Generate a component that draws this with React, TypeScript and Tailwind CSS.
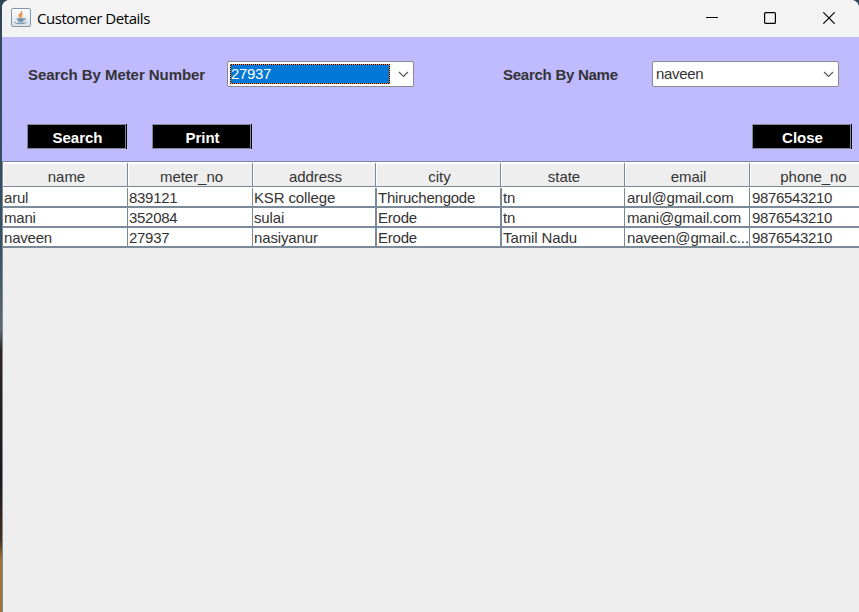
import React from "react";

const columns = [
  { name: "name", head: "w-[125px]", cell: "w-[125px] border-r pl-px tracking-[-0.2px]" },
  { name: "meter_no", head: "w-[125px]", cell: "w-[125px] border-r pl-px tracking-[-0.3px]" },
  { name: "address", head: "w-[123px]", cell: "w-[124px] border-r-2 pl-px tracking-[-0.13px]" },
  { name: "city", head: "w-[125px]", cell: "w-[125px] border-r-2 pl-px tracking-[-0.23px]" },
  { name: "state", head: "w-[124px]", cell: "w-[123px] border-r pl-px tracking-[-0.1px]" },
  { name: "email", head: "w-[125px]", cell: "w-[125px] border-r pl-[2px] tracking-[-0.15px]" },
  { name: "phone_no", head: "w-[125px]", cell: "w-[125px] border-r pl-[2px] tracking-[-0.33px]" },
];

const rows = [
  ["arul", "839121", "KSR college", "Thiruchengode", "tn", "arul@gmail.com", "9876543210"],
  ["mani", "352084", "sulai", "Erode", "tn", "mani@gmail.com", "9876543210"],
  ["naveen", "27937", "nasiyanur", "Erode", "Tamil Nadu", "naveen@gmail.c...", "9876543210"],
];

function JavaIcon() {
  return (
    <svg width="20" height="19" viewBox="0 0 20 19" fill="none">
      <defs>
        <linearGradient id="tile" x1="0" y1="0" x2="0" y2="1">
          <stop stopColor="#ffffff" />
          <stop offset="1" stopColor="#dce1e6" />
        </linearGradient>
      </defs>
      <rect x="0.5" y="0.5" width="19" height="18" rx="1.5" fill="url(#tile)" stroke="#7e98ae" />
      <path d="M10.5 3C11.5 5 7 6 8 8.3L9.5 10C9.3 8.2 11.5 7 10.5 3Z" fill="#ee8c3d" stroke="#ee8c3d" strokeWidth="0.9" />
      <path d="M12 5.7C9.5 7 11.6 8 10.3 10" stroke="#e9a365" />
      <path d="M5.5 10.3H13C13 12.7 12 13.7 10 13.7S6 12.7 5.5 10.3Z" fill="#6d8eac" />
      <path d="M13 10.6C15.5 10.2 15 12.4 12.6 12.6" stroke="#6d8eac" />
      <path d="M3.5 14.3C6 16.2 13 16.2 15.8 14.2M7 14H12.5" stroke="#7593ae" />
    </svg>
  );
}

function Chevron() {
  return (
    <svg width="11" height="7" viewBox="0 0 11 7" fill="none" className="shrink-0">
      <path d="M1 1L5.5 5.5L10 1" stroke="#555" strokeWidth="1.1" />
    </svg>
  );
}

function ActionButton({ label, className = "" }: { label: string; className?: string }) {
  return (
    <button
      className={`h-[25px] w-[100px] border-r border-black bg-[#7a8a99] p-px ${className}`}
    >
      <span className="flex h-full items-center justify-center bg-black pt-px pl-[2px] text-[15px] leading-none font-bold text-white">
        {label}
      </span>
    </button>
  );
}

export default function App() {
  return (
    <div className="h-[612px] w-[859px] overflow-hidden bg-[linear-gradient(#2e4656_0px,#3b5262_250px,#5c6970_330px,#30241f_350px,#1c1618_480px,#453020_540px,#a57135_560px,#a57135_612px)] pl-[2px] font-['Liberation_Sans',Arial,sans-serif] text-[15px] leading-none text-[#333]">
      <div className="flex h-full flex-col overflow-hidden rounded-t-[8px] bg-[#eee]">
        <header className="flex h-[37px] shrink-0 items-center bg-[#f3f3f3] pr-[24px] pl-[9px]">
          <div className="-mt-[2px]"><JavaIcon /></div>
          <h1 className="ml-[6px] font-['Open_Sans','Noto_Sans',sans-serif] text-[15px] tracking-[-0.46px] text-black">
            Customer Details
          </h1>
          <div className="-mt-px ml-auto flex items-center">
            <svg width="12" height="12" viewBox="0 0 12 12"><path d="M0 5.5H12" stroke="#000" /></svg>
            <svg className="ml-[46px]" width="12" height="12" viewBox="0 0 12 12" fill="none"><rect x="0.6" y="0.6" width="10.8" height="10.8" rx="1" stroke="#000" strokeWidth="1.2" /></svg>
            <svg className="ml-[47px]" width="12" height="12" viewBox="0 0 12 12"><path d="M0.3 0.3L11.7 11.7M11.7 0.3L0.3 11.7" stroke="#000" strokeWidth="1.2" /></svg>
          </div>
        </header>

        <section className="h-[124px] shrink-0 bg-[#c0baff] pt-[24px]">
          <div className="flex h-[26px] items-center">
            <label className="ml-[26px] w-[199px] font-bold tracking-[-0.06px]">Search By Meter Number</label>
            <div className="flex h-[26px] w-[187px] items-center rounded-[2px] border border-[#8a8a8a] bg-white pr-[4px] pl-[2px]">
              <div className="h-[20px] w-[160px] bg-[repeating-conic-gradient(#000_0_25%,#ff8728_0_50%)] bg-[length:2px_2px] p-px">
                <div className="h-full bg-[#0078d7] pt-px tracking-[-0.35px] text-white">27937</div>
              </div>
              <div className="ml-auto"><Chevron /></div>
            </div>
            <label className="ml-[89px] w-[149px] font-bold tracking-[-0.26px]">Search By Name</label>
            <div className="flex h-[26px] w-[187px] items-center justify-between rounded-[2px] border border-[#8a8a8a] bg-white pr-[4px] pl-[3px]">
              <span className="pb-[2px] tracking-[-0.3px]">naveen</span>
              <Chevron />
            </div>
          </div>
          <div className="mt-[37px] flex pr-[7px] pl-[25px]">
            <ActionButton label="Search" />
            <ActionButton label="Print" className="ml-[25px]" />
            <ActionButton label="Close" className="ml-auto" />
          </div>
        </section>

        <main className="flex-1 overflow-hidden border-t border-l border-[#7a8a99]">
          <div className="flex w-[872px] bg-white">
            {columns.map((column) => (
              <div
                key={column.name}
                className={`h-[26px] shrink-0 border-b border-white pt-px ${column.head}`}
              >
                <div className="h-[24px] border-r border-b border-[#7a8a99] pt-px pl-px">
                  <div className="flex h-full items-center justify-center bg-[#eee] pt-[2px] pl-[2px] tracking-[-0.05px]">
                    {column.name}
                  </div>
                </div>
              </div>
            ))}
          </div>
          {rows.map((row) => (
            <div key={row[0]} className="flex w-[872px]">
              {row.map((value, index) => (
                <div
                  key={columns[index].name}
                  className={`h-[20px] shrink-0 overflow-hidden border-b-2 border-[#7a8a99] bg-white pt-[2px] whitespace-nowrap ${columns[index].cell}`}
                >
                  {value}
                </div>
              ))}
            </div>
          ))}
        </main>
      </div>
    </div>
  );
}
